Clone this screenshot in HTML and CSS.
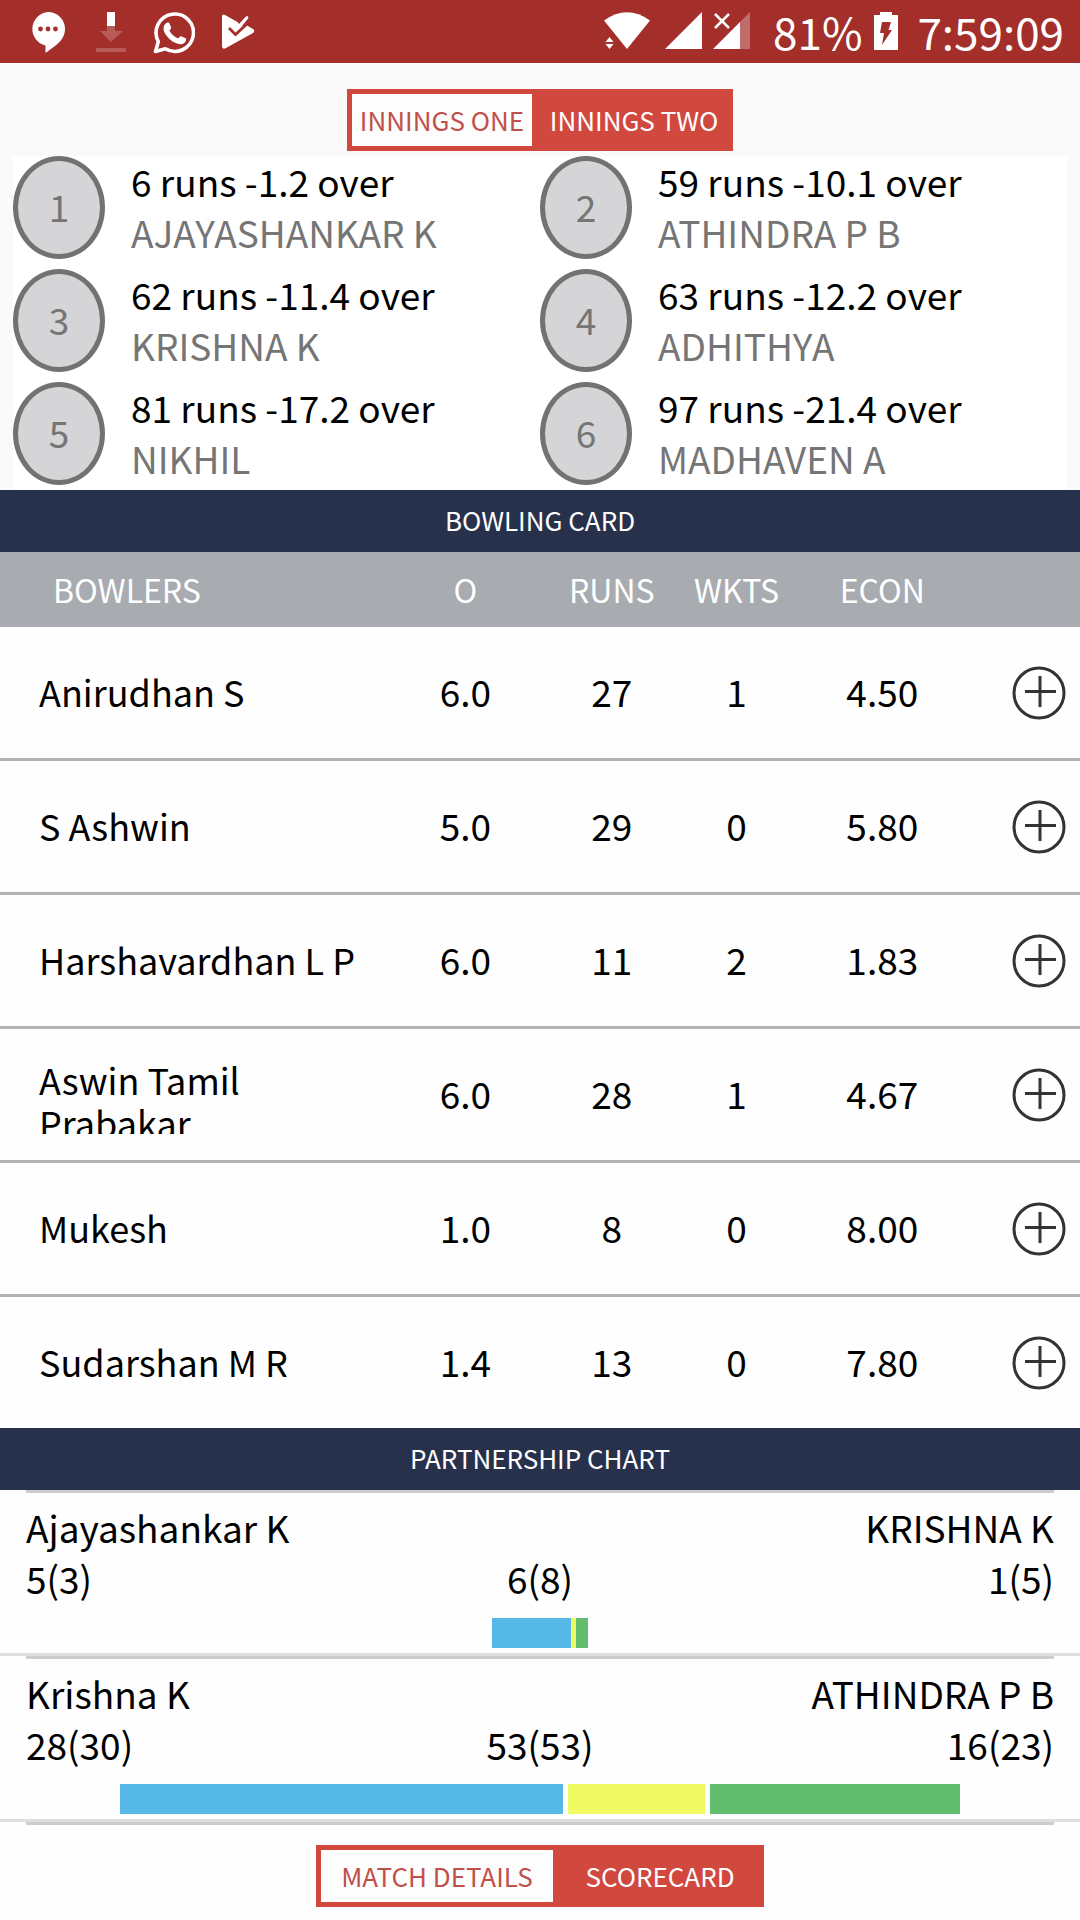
FILE: index.html
```html
<!DOCTYPE html>
<html lang="en">
<head>
<meta charset="utf-8">
<meta name="viewport" content="width=device-width, initial-scale=1">
<title>Scorecard</title>
<link rel="stylesheet" href="styles.css">
</head>
<body>
<header class="status">
  <div class="status-left">
    <svg width="34" height="42" viewBox="0 0 34 42" aria-hidden="true"><path fill="#fff" d="M17 0a17 17 0 0 1 17 17c0 8-5 13-10 17l-9.500 7V33.500A17 17 0 0 1 17 0z"/><g fill="#a32e2a"><circle cx="9.500" cy="17" r="2.400"/><circle cx="17" cy="17" r="2.400"/><circle cx="24.500" cy="17" r="2.400"/></g></svg>
    <svg width="30" height="40" viewBox="0 0 30 40" aria-hidden="true"><path fill="#fff" d="M11 0h8v14h-8z"/><path fill="#fff" fill-opacity=".22" d="M11 14h8v5h8L15 30 4 19h7zM0 36h30v4H0z"/></svg>
    <svg width="42" height="43" viewBox="0 1 42 43" aria-hidden="true"><path fill="none" stroke="#fff" stroke-width="3.600" stroke-linejoin="round" d="M2.500 40.500 5.300 30.500A18.700 18.700 0 1 1 12.300 37.800z"/><path fill="#fff" d="M14.500 11.500c1-.3 1.700.2 2.100 1.200l1.500 3.600c.3.900-.2 1.500-1.700 3.300 2 4 4.800 6.300 8.800 8 1.600-1.900 2.200-2.700 3.200-2.300l4 1.900c.8.400.8.900.7 1.800-.4 3-3.700 4.300-6 4.200-3.600-.3-8.600-2.800-11.600-6.200-2.600-2.900-5-6.200-5-9.500 0-3.500 2-5.500 4-6z"/></svg>
    <svg width="33" height="38" viewBox="0 -2 33 38" aria-hidden="true"><path fill="#fff" d="M0 2.500Q0-.5 3 1L15.500 8 17 10 24 2.500Q26 1 26.500 4L20 12 25 11.500 31 15Q33.500 17 31 19L4 34Q0 36 0 32z"/><path fill="none" stroke="#a32e2a" stroke-width="2.800" d="M7 14 13.500 20.500 27.500 7.500"/></svg>
  </div>
  <div class="status-right">
    <svg width="46" height="38" viewBox="0 0 46 38" aria-hidden="true"><path fill="#fff" d="M0 8.500Q23-8 46 8.500L23 37z"/><path fill="#fff" stroke="#a32e2a" stroke-width="1" d="M5.500 24.500 10.500 30.500H.5zM.5 31.500h10l-5 6z"/></svg>
    <svg class="icon-signal" width="38" height="38" viewBox="0 0 38 38" aria-hidden="true"><path fill="#fff" d="M37 0v37H0z"/></svg>
    <svg width="38" height="38" viewBox="0 0 38 38" aria-hidden="true"><path fill="#fff" fill-opacity=".3" d="M37 0v37H27V10z"/><path fill="#fff" d="M27 10v27H0z"/><path stroke="#a32e2a" stroke-width="5" d="M9 9l8 8"/><path stroke="#fff" stroke-width="2.500" d="M2 2l14 14M16 2 2 16"/></svg>
    <span class="status-text battery-text">81%</span>
    <svg width="24" height="38" viewBox="0 0 24 38" aria-hidden="true"><path fill="#fff" d="M6 0h12v3h6v35H0V3h6z"/><path fill="#a32e2a" d="M8 10h9l-2.500 8H18L8 33l2-12H6z"/></svg>
    <span class="status-text">7:59:09</span>
  </div>
</header>

<nav class="toggle-row" aria-label="Innings">
  <div class="toggle">
    <button class="tab tab-one active" type="button">INNINGS ONE</button>
    <button class="tab tab-two" type="button">INNINGS TWO</button>
  </div>
</nav>

<main>
  <ol class="wickets">
    <li class="wicket"><span class="badge">1</span><div><p>6 runs -1.2 over</p><p class="player">AJAYASHANKAR K</p></div></li>
    <li class="wicket"><span class="badge">2</span><div><p>59 runs -10.1 over</p><p class="player">ATHINDRA P B</p></div></li>
    <li class="wicket"><span class="badge">3</span><div><p>62 runs -11.4 over</p><p class="player">KRISHNA K</p></div></li>
    <li class="wicket"><span class="badge">4</span><div><p>63 runs -12.2 over</p><p class="player">ADHITHYA</p></div></li>
    <li class="wicket"><span class="badge">5</span><div><p>81 runs -17.2 over</p><p class="player">NIKHIL</p></div></li>
    <li class="wicket"><span class="badge">6</span><div><p>97 runs -21.4 over</p><p class="player">MADHAVEN A</p></div></li>
  </ol>

  <h2 class="band">BOWLING CARD</h2>
  <table class="bowling">
    <colgroup><col class="c-name"><col class="c-overs"><col class="c-runs"><col class="c-wkts"><col class="c-econ"><col></colgroup>
    <thead>
      <tr><th scope="col">BOWLERS</th><th scope="col">O</th><th scope="col">RUNS</th><th scope="col">WKTS</th><th scope="col">ECON</th><td></td></tr>
    </thead>
    <tbody>
      <tr><td class="bowler">Anirudhan S</td><td>6.0</td><td>27</td><td>1</td><td>4.50</td><td class="action"><button class="more" type="button" aria-label="Show Anirudhan S"><svg width="54" height="54" viewBox="0 0 54 54"><circle cx="27" cy="27" r="25"/><path d="M28 10v31M13 25.500h31"/></svg></button></td></tr>
      <tr><td class="bowler">S Ashwin</td><td>5.0</td><td>29</td><td>0</td><td>5.80</td><td class="action"><button class="more" type="button" aria-label="Show S Ashwin"><svg width="54" height="54" viewBox="0 0 54 54"><circle cx="27" cy="27" r="25"/><path d="M28 10v31M13 25.500h31"/></svg></button></td></tr>
      <tr><td class="bowler">Harshavardhan L P</td><td>6.0</td><td>11</td><td>2</td><td>1.83</td><td class="action"><button class="more" type="button" aria-label="Show Harshavardhan L P"><svg width="54" height="54" viewBox="0 0 54 54"><circle cx="27" cy="27" r="25"/><path d="M28 10v31M13 25.500h31"/></svg></button></td></tr>
      <tr><td class="bowler two-line"><div class="clip">Aswin Tamil Prabakar</div></td><td>6.0</td><td>28</td><td>1</td><td>4.67</td><td class="action"><button class="more" type="button" aria-label="Show Aswin Tamil Prabakar"><svg width="54" height="54" viewBox="0 0 54 54"><circle cx="27" cy="27" r="25"/><path d="M28 10v31M13 25.500h31"/></svg></button></td></tr>
      <tr><td class="bowler">Mukesh</td><td>1.0</td><td>8</td><td>0</td><td>8.00</td><td class="action"><button class="more" type="button" aria-label="Show Mukesh"><svg width="54" height="54" viewBox="0 0 54 54"><circle cx="27" cy="27" r="25"/><path d="M28 10v31M13 25.500h31"/></svg></button></td></tr>
      <tr><td class="bowler">Sudarshan M R</td><td>1.4</td><td>13</td><td>0</td><td>7.80</td><td class="action"><button class="more" type="button" aria-label="Show Sudarshan M R"><svg width="54" height="54" viewBox="0 0 54 54"><circle cx="27" cy="27" r="25"/><path d="M28 10v31M13 25.500h31"/></svg></button></td></tr>
    </tbody>
  </table>

  <h2 class="band">PARTNERSHIP CHART</h2>
  <section class="pair">
    <div class="pair-body">
      <div class="names"><span>Ajayashankar K</span><span>KRISHNA K</span></div>
      <div class="scores"><span>5(3)</span><span>6(8)</span><span>1(5)</span></div>
      <div class="bar"><i class="blue" style="width:7.7%"></i><i class="yellow" style="width:.5%"></i><i class="green" style="width:1.1%"></i></div>
    </div>
  </section>
  <section class="pair">
    <div class="pair-body">
      <div class="names"><span>Krishna K</span><span>ATHINDRA P B</span></div>
      <div class="scores"><span>28(30)</span><span>53(53)</span><span>16(23)</span></div>
      <div class="bar spaced"><i class="blue" style="width:43.1%"></i><i class="yellow" style="width:13.3%"></i><i class="green" style="width:24.3%"></i></div>
    </div>
  </section>
</main>

<footer class="footer">
  <div class="toggle">
    <button class="tab tab-match active" type="button">MATCH DETAILS</button>
    <button class="tab tab-score" type="button">SCORECARD</button>
  </div>
</footer>
</body>
</html>
```

FILE: styles.css
```css
* { box-sizing: border-box; }

body {
  margin: 0;
  background: #fefefe;
  color: #000;
  font-family: "Noto Sans CJK SC", "Noto Sans CJK JP", sans-serif;
  font-size: 37px;
  line-height: 51px;
}

p, h2, ol { margin: 0; padding: 0; }
button { font: inherit; cursor: pointer; }
svg { display: block; flex: none; }

/* Status bar */
.status {
  display: flex;
  justify-content: space-between;
  align-items: flex-start;
  height: 63px;
  padding: 12px 16px 0 31px;
  background: #a32e2a;
  color: #fff;
}
.status-left, .status-right { display: flex; align-items: flex-start; }
.status-left { gap: 27px; }
.status-left svg:first-child { margin-right: 4px; }
.icon-signal { margin: 0 10px 0 15px; }
.status-text { font-size: 44px; line-height: 38px; }
.battery-text { margin: 0 12px 0 22px; }
.status-text:last-child { margin-left: 19px; }

/* Two-way switches */
.toggle-row {
  display: flex;
  justify-content: center;
  padding: 26px 0 5px;
  background: #fafafa;
}
.toggle {
  display: flex;
  border: 5px solid #d1483f;
  background: #d1483f;
}
.tab {
  height: 52px;
  border: 0;
  padding: 0;
  background: #d1483f;
  color: #fff;
  font-size: 26px;
  line-height: 50px;
  text-align: center;
}
.tab.active { background: #fdfdfd; color: #c2504a; }
.tab-one { width: 180px; }
.tab-two { width: 196px; padding-left: 8px; }
.tab-match { width: 232px; }
.tab-score { width: 206px; padding-left: 8px; }

/* Fall of wickets */
.wickets {
  display: grid;
  grid-template-columns: 1fr 1fr;
  row-gap: 10px;
  padding-bottom: 5px;
  list-style: none;
  background: #fff;
  border: solid #fafafa;
  border-width: 0 13px;
}
.wicket { display: flex; gap: 26px; height: 103px; }
.badge {
  display: flex;
  align-items: center;
  justify-content: center;
  flex: none;
  width: 92px;
  padding-bottom: 2px;
  border: 5px solid #727272;
  border-radius: 50%;
  background: #d5d5d7;
  color: #757575;
}
.player { color: #757575; }

/* Section heading */
.band {
  height: 62px;
  background: #28314b;
  color: #fff;
  font-size: 26px;
  font-weight: 400;
  line-height: 60px;
  text-align: center;
}

/* Bowling card */
.bowling {
  width: 100%;
  table-layout: fixed;
  border-spacing: 0;
  text-align: center;
}
.bowling th, .bowling td { padding: 0; font-weight: 400; vertical-align: middle; }
.bowling thead tr { height: 75px; background: #a8abb0; color: #fff; font-size: 32px; }
.bowling th:first-child { padding-left: 53px; text-align: left; }
.c-name { width: 36.2%; }
.c-overs { width: 13.8%; }
.c-runs { width: 13.3%; }
.c-wkts { width: 9.8%; }
.c-econ { width: 17.2%; }
.bowling tbody td { height: 134px; padding-bottom: 3px; border-bottom: 3px solid #b3b3b3; }
.bowling tbody tr:last-child td { height: 131px; border-bottom: 0; }
.bowling tbody .bowler { padding-left: 39px; font-size: 36px; text-align: left; }
.bowling tbody .two-line, .bowling tbody .action { padding-bottom: 0; }
.bowling tbody .action { padding-right: 14px; }
.clip {
  max-height: 79px;
  padding-top: 3px;
  overflow: hidden;
  line-height: 43px;
}
.more { display: block; margin-left: auto; padding: 0; border: 0; background: none; }
.more svg { fill: none; stroke: #333; stroke-width: 3; }

/* Partnerships */
.pair { border-bottom: 3px solid #dedede; }
.pair-body { margin: 0 26px; border-top: 3px solid #ccc; padding-top: 9px; }
.names { display: flex; justify-content: space-between; }
.scores { display: grid; grid-template-columns: 1fr 1fr 1fr; text-align: center; }
.scores span:first-child { text-align: left; }
.scores span:last-child { text-align: right; }
.bar { display: flex; justify-content: center; height: 35px; margin-top: 14px; padding-bottom: 5px; }
.bar.spaced { gap: 5px; }
.blue { background: #55b8e6; }
.yellow { background: #f0fa62; }
.green { background: #62bd6f; }

.footer {
  display: flex;
  justify-content: center;
  position: relative;
  padding: 23px 0 13px;
}
.footer::before {
  content: "";
  position: absolute;
  top: 0;
  left: 26px;
  right: 26px;
  border-top: 3px solid #ccc;
}
```
